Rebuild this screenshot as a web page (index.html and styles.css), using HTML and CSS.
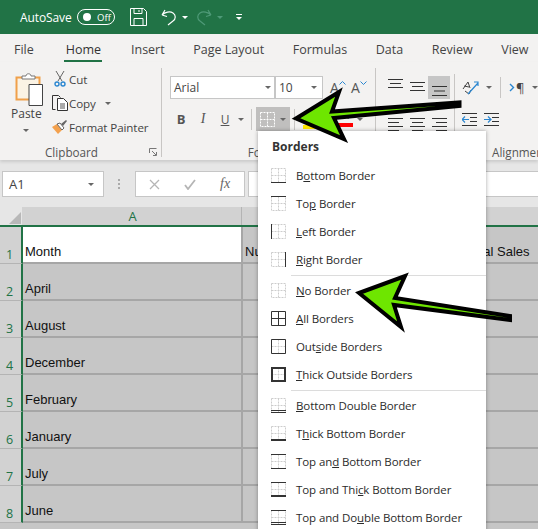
FILE: index.html
```
<!DOCTYPE html>
<html lang="en">
<head>
<meta charset="utf-8">
<title>Borders menu</title>
<link rel="stylesheet" href="styles.css">
</head>
<body>
<svg class="defs" width="0" height="0" aria-hidden="true">
  <symbol id="dots" viewBox="0 0 15 15">
    <path d="M.5.5h14v14H.5zM7.500.5v14M.5 7.500h14" fill="none" stroke="#cdcdcd" stroke-width="1" stroke-dasharray="2 1"/>
  </symbol>
  <symbol id="dots-light" viewBox="0 0 15 15">
    <path d="M.5.5h14v14H.5zM7.500.5v14M.5 7.500h14" fill="none" stroke="#fff" stroke-width="1" stroke-dasharray="2 1"/>
  </symbol>
</svg>
<div class="app">
  <header class="titlebar">
    <span class="autosave">AutoSave</span>
    <span class="toggle"><i class="knob"></i><span>Off</span></span>
    <svg class="save" width="17" height="18" viewBox="0 0 17 18"><path d="M.5.5h13l3 3v14H.5zM4 .5v5h8v-5M4 17.500v-7h9v7M9 2v2" fill="none" stroke="#fff"/></svg>
    <svg class="undo" width="16" height="18" viewBox="0 0 16 18"><path d="M1 7l3-5M1 7l5 1.500M1 7c3-3 8-4 11-2 3 2 3 6 0 8l-5 4" fill="none" stroke="#fff" stroke-width="1.200"/></svg>
    <i class="caret light"></i>
    <svg class="redo" width="16" height="18" viewBox="0 0 16 18"><path d="M15 7l-3-5M15 7l-5 1.500M15 7c-3-3-8-4-11-2-3 2-3 6 0 8l5 4" fill="none" stroke="#4f9a78" stroke-width="1.200"/></svg>
    <i class="caret dim"></i>
    <span class="qat"><i></i><i class="caret light"></i></span>
  </header>

  <nav class="tabs">
    <span class="file">File</span><span class="active">Home</span><span>Insert</span><span>Page Layout</span><span>Formulas</span><span>Data</span><span>Review</span><span>View</span>
  </nav>

  <section class="ribbon">
    <div class="group clipboard">
      <div class="group-body">
        <div class="paste">
          <svg width="28" height="34" viewBox="0 0 28 34">
            <path d="M1.500 5.500h23v22h-23z" fill="#fbf3e4" stroke="#f0a04a" stroke-width="2"/>
            <path d="M7 7V4h4c0-3 5-3 5 0h4v3z" fill="#fff" stroke="#777"/>
            <path d="M14 12.500h13.500v21H14z" fill="#fff" stroke="#444"/>
          </svg>
          <span class="paste-label">Paste</span>
          <i class="caret"></i>
        </div>
        <div class="commands">
          <div class="cmd">
            <span class="cmd-icon"><svg width="12" height="16" viewBox="0 0 12 16"><path d="M2 0l6 10M10 0L4 10" stroke="#666" fill="none"/><circle cx="3" cy="13" r="2" fill="none" stroke="#2a86d0" stroke-width="1.400"/><circle cx="9" cy="13" r="2" fill="none" stroke="#2a86d0" stroke-width="1.400"/></svg></span>
            <span>Cut</span>
          </div>
          <div class="cmd">
            <span class="cmd-icon"><svg width="16" height="16" viewBox="0 0 16 16"><path d="M3.500 14.500H.5V.5h6l2 2" fill="none" stroke="#333"/><path d="M5.500 3.500h6l4 4v8h-10z" fill="#fff" stroke="#333"/><path d="M8 9h5M8 11h5M8 13h5" stroke="#555"/></svg></span>
            <span>Copy</span><i class="caret copy-caret"></i>
          </div>
          <div class="cmd">
            <span class="cmd-icon"><svg width="17" height="15" viewBox="0 0 17 15"><path d="M1 7l5-3 5 6-4 4z" fill="#f3a14e"/><path d="M6 4l5 6 2-2-4-5z" fill="#fff" stroke="#666"/><path d="M10 4l5-4 1 1-4 5z" fill="#666"/></svg></span>
            <span>Format Painter</span>
          </div>
        </div>
      </div>
      <div class="group-label clip-label">Clipboard<svg class="launcher" width="8" height="8" viewBox="0 0 8 8"><path d="M.5 5V.5H7.500M3 3l4 4M7.500 4v3.500H4" fill="none" stroke="#777"/></svg></div>
    </div>

    <div class="group font">
      <div class="group-body font-body">
        <div class="font-row">
          <span class="combo font-name">Arial<i class="caret"></i></span>
          <span class="combo font-size">10<i class="caret"></i></span>
          <span class="grow">A<svg width="7" height="4" viewBox="0 0 7 4"><path d="M.5 3.500l3-3 3 3" fill="none" stroke="#2a86d0"/></svg></span>
          <span class="grow shrink">A<svg width="7" height="4" viewBox="0 0 7 4"><path d="M.5.5l3 3 3-3" fill="none" stroke="#2a86d0"/></svg></span>
        </div>
        <div class="font-row second">
          <b class="fmt">B</b><em class="fmt it">I</em><u class="fmt und">U</u><i class="caret fmt-caret"></i>
          <span class="vsep first"></span>
          <span class="border-btn"><svg width="15" height="15"><use href="#dots-light"/></svg><i class="caret"></i></span>
          <span class="vsep"></span>
          <span class="swatch"></span>
          <span class="fontcolor"><span>A</span><i></i></span>
          <i class="caret color-caret"></i>
        </div>
      </div>
      <div class="group-label font-label">Font</div>
    </div>

    <div class="group alignment">
      <div class="group-body align-body">
        <div class="align-icons">
          <svg class="ai-top" width="15" height="9" viewBox="0 0 15 9"><path d="M0 .5h15M2 4.500h11M0 8.500h15" stroke="#333"/></svg>
          <svg class="ai-mid" width="15" height="9" viewBox="0 0 15 9"><path d="M0 .5h15M2 4.500h11M0 8.500h15" stroke="#333"/></svg>
          <span class="ai-on"><svg width="15" height="10" viewBox="0 0 15 10"><path d="M0 .5h15M2 5h11M0 9.500h15" stroke="#333"/></svg></span>
          <svg class="ai" width="15" height="13" viewBox="0 0 15 13"><path d="M0 .5h15M0 4.500h11M0 8.500h15M0 12.500h11" stroke="#333"/></svg>
          <svg class="ai" width="15" height="13" viewBox="0 0 15 13"><path d="M0 .5h15M2 4.500h11M0 8.500h15M2 12.500h11" stroke="#333"/></svg>
          <svg class="ai" width="15" height="13" viewBox="0 0 15 13"><path d="M0 .5h15M4 4.500h11M0 8.500h15M4 12.500h11" stroke="#333"/></svg>
        </div>
        <span class="vsep tall"></span>
        <div class="orient">
          <div class="orient-row">
            <svg width="17" height="15" viewBox="0 0 17 15"><path d="M1 9l5-7 2 6M2 6l5 1M3 11l4 3 2-4" fill="none" stroke="#444"/><path d="M6 14L16 3M12 2h4v4" fill="none" stroke="#2a86d0" stroke-width="1.200"/></svg><i class="caret"></i>
            <span class="vsep short"></span>
            <span class="para"><svg width="6" height="9" viewBox="0 0 6 9"><path d="M1 1l3.500 3.500L1 8" fill="none" stroke="#2a86d0" stroke-width="1.400"/></svg>¶</span><i class="caret"></i>
          </div>
          <div class="orient-row">
            <svg width="15" height="13" viewBox="0 0 15 13"><path d="M0 6.500h7M3 3.500l-3 3 3 3" fill="none" stroke="#2a86d0" stroke-width="1.200"/><path d="M0 .5h15M8 4.500h7M8 8.500h7M0 12.500h15" stroke="#333"/></svg>
            <svg width="15" height="13" viewBox="0 0 15 13"><path d="M0 6.500h7M4 3.500l3 3-3 3" fill="none" stroke="#2a86d0" stroke-width="1.200"/><path d="M0 .5h15M8 4.500h7M8 8.500h7M0 12.500h15" stroke="#333"/></svg>
          </div>
        </div>
      </div>
      <div class="group-label align-label">Alignment</div>
    </div>
  </section>

  <section class="formula">
    <div class="namebox">A1<i class="caret"></i></div>
    <div class="grip"></div>
    <div class="fbuttons">
      <svg width="11" height="11" viewBox="0 0 11 11"><path d="M1 1l9 9M10 1l-9 9" stroke="#b5b5b5" stroke-width="1.300"/></svg>
      <svg width="12" height="11" viewBox="0 0 12 11"><path d="M1 6l3 4 7-9" fill="none" stroke="#b5b5b5" stroke-width="1.800"/></svg>
      <span class="fx">fx</span>
    </div>
    <div class="finput"></div>
  </section>

  <section class="colheads">
    <div class="corner"><i></i></div>
    <div class="colhead">A</div>
    <div class="colhead rest"></div>
  </section>

  <section class="sheet">
    <div class="rh">1</div><div class="cell first selected">Month</div><div class="cell mid">Number Sold</div><div class="cell last">Total Sales</div>
    <div class="rh">2</div><div class="cell first">April</div><div class="cell mid"></div><div class="cell last"></div>
    <div class="rh">3</div><div class="cell first">August</div><div class="cell mid"></div><div class="cell last"></div>
    <div class="rh">4</div><div class="cell first">December</div><div class="cell mid"></div><div class="cell last"></div>
    <div class="rh">5</div><div class="cell first">February</div><div class="cell mid"></div><div class="cell last"></div>
    <div class="rh">6</div><div class="cell first">January</div><div class="cell mid"></div><div class="cell last"></div>
    <div class="rh">7</div><div class="cell first">July</div><div class="cell mid"></div><div class="cell last"></div>
    <div class="rh">8</div><div class="cell first">June</div><div class="cell mid"></div><div class="cell last"></div>
  </section>
</div>

<aside class="menu">
  <div class="menu-title">Borders</div>
  <div class="item"><svg width="15" height="15"><use href="#dots"/><path d="M0 14.500h15" stroke="#333"/></svg><span>B<u>o</u>ttom Border</span></div>
  <div class="item"><svg width="15" height="15"><use href="#dots"/><path d="M0 .5h15" stroke="#333"/></svg><span>To<u>p</u> Border</span></div>
  <div class="item"><svg width="15" height="15"><use href="#dots"/><path d="M.5 0v15" stroke="#333"/></svg><span><u>L</u>eft Border</span></div>
  <div class="item"><svg width="15" height="15"><use href="#dots"/><path d="M14.500 0v15" stroke="#333"/></svg><span><u>R</u>ight Border</span></div>
  <div class="sep"></div>
  <div class="item"><svg width="15" height="15"><use href="#dots"/></svg><span><u>N</u>o Border</span></div>
  <div class="item"><svg width="15" height="15"><path d="M.5.5h14v14H.5zM7.500.5v14M.5 7.500h14" fill="none" stroke="#333"/></svg><span><u>A</u>ll Borders</span></div>
  <div class="item"><svg width="15" height="15"><use href="#dots"/><path d="M.5.5h14v14H.5z" fill="none" stroke="#333"/></svg><span>Out<u>s</u>ide Borders</span></div>
  <div class="item"><svg width="15" height="15"><use href="#dots"/><path d="M1 1h13v13H1z" fill="none" stroke="#333" stroke-width="2"/></svg><span><u>T</u>hick Outside Borders</span></div>
  <div class="sep"></div>
  <div class="item"><svg width="15" height="15"><use href="#dots"/><path d="M0 12.500h15M0 14.500h15" stroke="#333"/></svg><span><u>B</u>ottom Double Border</span></div>
  <div class="item"><svg width="15" height="15"><use href="#dots"/><path d="M0 14h15" stroke="#333" stroke-width="2"/></svg><span>T<u>h</u>ick Bottom Border</span></div>
  <div class="item"><svg width="15" height="15"><use href="#dots"/><path d="M0 .5h15M0 14.500h15" stroke="#333"/></svg><span>Top an<u>d</u> Bottom Border</span></div>
  <div class="item"><svg width="15" height="15"><use href="#dots"/><path d="M0 .5h15" stroke="#333"/><path d="M0 14h15" stroke="#333" stroke-width="2"/></svg><span>Top and Thi<u>c</u>k Bottom Border</span></div>
  <div class="item"><svg width="15" height="15"><use href="#dots"/><path d="M0 .5h15M0 12.500h15M0 14.500h15" stroke="#333"/></svg><span>Top and Do<u>u</u>ble Bottom Border</span></div>
</aside>

<svg class="arrows" width="538" height="529" viewBox="0 0 538 529" aria-hidden="true">
  <path d="M296 118.500L339 92 332 111.500 459.500 102.500 459.500 106 334 118 344 139z"/>
  <path d="M359 293L405 276 395 298 510 316 510 320 394 305 401 327z"/>
</svg>
</body>
</html>
```

FILE: styles.css
```
* { box-sizing: border-box; }
html, body { margin: 0; height: 100%; overflow: hidden; }
body { position: relative; width: 538px; height: 529px; font-family: "Open Sans", "Noto Sans", sans-serif; font-size: 12px; color: #444; background: #c6c6c6; }
.defs { position: absolute; }
.app { display: flex; flex-direction: column; height: 529px; overflow: hidden; }

.caret { display: inline-block; width: 0; height: 0; border-left: 3.5px solid transparent; border-right: 3.5px solid transparent; border-top: 3.5px solid #666; flex: none; }
.caret.light { border-top-color: #fff; }
.caret.dim { border-top-color: #4f9a78; }

.titlebar { height: 34px; flex: none; background: #217346; color: #fff; display: flex; align-items: center; padding-left: 20px; }
.autosave { width: 57px; font-size: 12px; letter-spacing: -.1px; }
.toggle { width: 38px; height: 16px; border: 1px solid #fff; border-radius: 8px; display: flex; align-items: center; padding-left: 5px; font-size: 9.5px; gap: 6px; }
.knob { width: 8px; height: 8px; border-radius: 50%; background: #fff; }
.save { margin-left: 15px; }
.undo { margin-left: 14px; }
.titlebar .caret { margin-left: 5px; }
.redo { margin-left: 8px; }
.qat { margin-left: 13px; display: flex; flex-direction: column; gap: 2px; }
.qat i:first-child { width: 6px; height: 1px; background: #fff; }
.qat .caret { margin-left: 0; border-left-width: 3px; border-right-width: 3px; }

.tabs { height: 28px; flex: none; background: #f3f2f1; display: flex; gap: 28.6px; padding: 2px 0 0 14px; font-size: 12.5px; line-height: 27px; color: #444; }
.tabs .file { margin-right: 2px; }
.tabs .active { width: 38px; text-align: center; color: #333; font-weight: 500; border-bottom: 2px solid #217346; height: 26px; }

.ribbon { height: 98px; flex: none; background: #f3f2f1; display: flex; align-items: flex-start; padding-top: 6px; box-shadow: 0 2px 3px rgba(0,0,0,.12); position: relative; }
.group { height: 89px; border-right: 1px solid #c8c6c4; display: flex; flex-direction: column; flex: none; }
.group-body { height: 74px; flex: none; }
.group-label { height: 20px; flex: none; font-size: 11.7px; line-height: 20px; text-align: center; color: #555; position: relative; }

.clipboard { width: 162px; }
.clipboard .group-body { display: flex; }
.paste { width: 50px; padding: 4px 0 0 15px; display: flex; flex-direction: column; }
.paste .caret { margin: 7px 0 0 8px; }
.paste-label { font-size: 12px; margin: 0 0 0 -4px; line-height: 16px; }
.commands { display: flex; flex-direction: column; margin-top: -1px; }
.cmd { display: flex; align-items: center; height: 24px; flex: none; font-size: 11.6px; letter-spacing: -.1px; white-space: nowrap; }
.cmd-icon { width: 19px; display: flex; justify-content: center; }
.copy-caret { margin-left: 9px; }
.clip-label { text-align: left; padding-left: 45px; }
.launcher { position: absolute; left: 149px; top: 6px; }

.font { width: 214px; }
.font-body { padding: 8px 0 0 8px; }
.font-label { padding-right: 17px; }
.font-row { display: flex; align-items: center; height: 23px; }
.combo { height: 23px; background: #fff; border: 1px solid #c6c6c6; display: flex; align-items: center; justify-content: space-between; padding: 0 3px; font-size: 12px; color: #444; }
.font-name { width: 105px; }
.font-size { width: 48px; margin-right: 7px; padding-right: 5px; }
.grow { width: 21px; font-size: 14px; display: flex; align-items: flex-start; line-height: 18px; color: #555; }
.grow svg { margin: 2px 0 0 0; }
.second { margin-top: 8px; height: 24px; }
.fmt { width: 22px; text-align: center; font-size: 13px; color: #555; }
.it { font-weight: 400; font-family: "Liberation Serif", serif; font-size: 14px; }
.und { font-size: 12px; }
.fmt-caret { margin-left: 2px; }
.vsep { width: 1px; height: 21px; background: #c8c6c4; margin: 0 5px 0 4px; flex: none; }
.vsep.first { margin: 0 4px 0 7px; }
.border-btn { width: 34px; height: 24px; background: #c0bfbe; display: flex; align-items: center; gap: 5px; padding-left: 4px; flex: none; }
.swatch { width: 12px; height: 4px; margin: 16px 0 0 3px; background: #ffe900; }
.fontcolor { width: 16px; margin-left: 22px; display: flex; flex-direction: column; align-items: center; align-self: flex-start; height: 20px; font-size: 12px; line-height: 16px; color: #444; }
.fontcolor i { width: 16px; height: 4px; background: #f00; flex: none; }
.color-caret { margin-left: 4px; }

.alignment { width: 300px; border-right: 0; }
.align-body { display: flex; padding: 8px 0 0 12px; }
.align-icons { display: grid; grid-template-columns: repeat(3, 22px); grid-template-rows: 23px 23px; row-gap: 14px; align-items: center; width: 66px; justify-items: start; height: 60px; }
.ai-top { align-self: start; margin-top: 3px; }
.ai-mid { align-self: start; margin-top: 6px; }
.ai-on { width: 22px; height: 23px; background: #c6c6c6; display: flex; align-items: flex-end; justify-content: center; padding-bottom: 3px; margin-left: -4px; }
.vsep.tall { height: 60px; margin: -2px 7px 0 0; }
.orient { display: flex; flex-direction: column; gap: 9px; }
.orient-row { display: flex; align-items: center; gap: 7px; height: 23px; }
.vsep.short { margin: 0 1px; }
.para { display: flex; align-items: center; gap: 1px; font-size: 13px; color: #444; }
.align-label { text-align: left; padding-left: 116px; }

.formula { height: 47px; flex: none; background: #e6e6e6; display: flex; padding: 11px 0 10px 2px; }
.namebox { width: 102px; background: #fff; border: 1px solid #c6c6c6; display: flex; align-items: center; justify-content: space-between; padding: 0 9px 0 6px; font-size: 13px; color: #444; }
.grip { width: 2px; height: 10px; margin: 8px 15px 0 14px; border-left: 2px dotted #aaa; }
.fbuttons { width: 110px; background: #fff; border: 1px solid #c6c6c6; display: flex; align-items: center; gap: 24px; padding-left: 13px; }
.fx { font-family: "Liberation Serif", serif; font-style: italic; font-size: 14px; color: #666; }
.finput { flex: 1; background: #fff; border: 1px solid #c6c6c6; margin-left: 3px; border-right: 0; }

.colheads { height: 20px; flex: none; display: grid; grid-template-columns: 22px 220px 1fr; background: #d2d2d2; }
.corner { background: #e6e6e6; position: relative; }
.corner i { position: absolute; right: 1px; bottom: 3px; width: 0; height: 0; border-left: 12px solid transparent; border-bottom: 12px solid #b8b8b8; }
.colhead { text-align: center; font-size: 13px; line-height: 18px; padding-left: 2px; color: #217346; border-right: 1px solid #b4b4b4; }
.colhead.rest { border-right: 0; }

.sheet { flex: 1; display: grid; grid-template-columns: 23px 220px 221px 1fr; grid-auto-rows: 37px; align-content: start; font-family: "Liberation Sans", Arial, sans-serif; font-size: 13px; color: #111; position: relative; border-top: 2px solid #217346; margin-top: -2px; background: #c6c6c6; }
.rh { background: #d2d2d2; color: #217346; border-bottom: 1px solid #b4b4b4; border-right: 2px solid #217346; font-family: "Open Sans", sans-serif; font-size: 12.5px; line-height: 14px; display: flex; align-items: flex-end; padding: 0 0 1px 6px; }
.cell { background: #c6c6c6; border-bottom: 2px solid #a6a6a6; display: flex; align-items: flex-end; padding: 0 0 3px 2px; white-space: nowrap; overflow: hidden; }
.cell.first { border-right: 2px solid #a6a6a6; }
.cell.selected { background: #fff; }

.menu { position: absolute; left: 258px; top: 131px; width: 228px; height: 410px; background: #fff; box-shadow: 0 0 4px rgba(0,0,0,.35); color: #2b2b2b; font-size: 11.5px; letter-spacing: -.1px; }
.menu-title { height: 30.5px; padding-left: 14px; font-weight: 700; line-height: 31px; font-size: 12px; color: #333; letter-spacing: 0; }
.item { height: 28px; display: flex; align-items: center; gap: 10px; padding-left: 13px; white-space: nowrap; }
.sep { height: 1px; margin: 1px 0 1px 33px; background: #dcdcdc; }

.arrows { position: absolute; left: 0; top: 0; pointer-events: none; }
.arrows path { fill: #6ee600; stroke: #000; stroke-width: 4px; stroke-linejoin: miter; stroke-miterlimit: 6; }
```
